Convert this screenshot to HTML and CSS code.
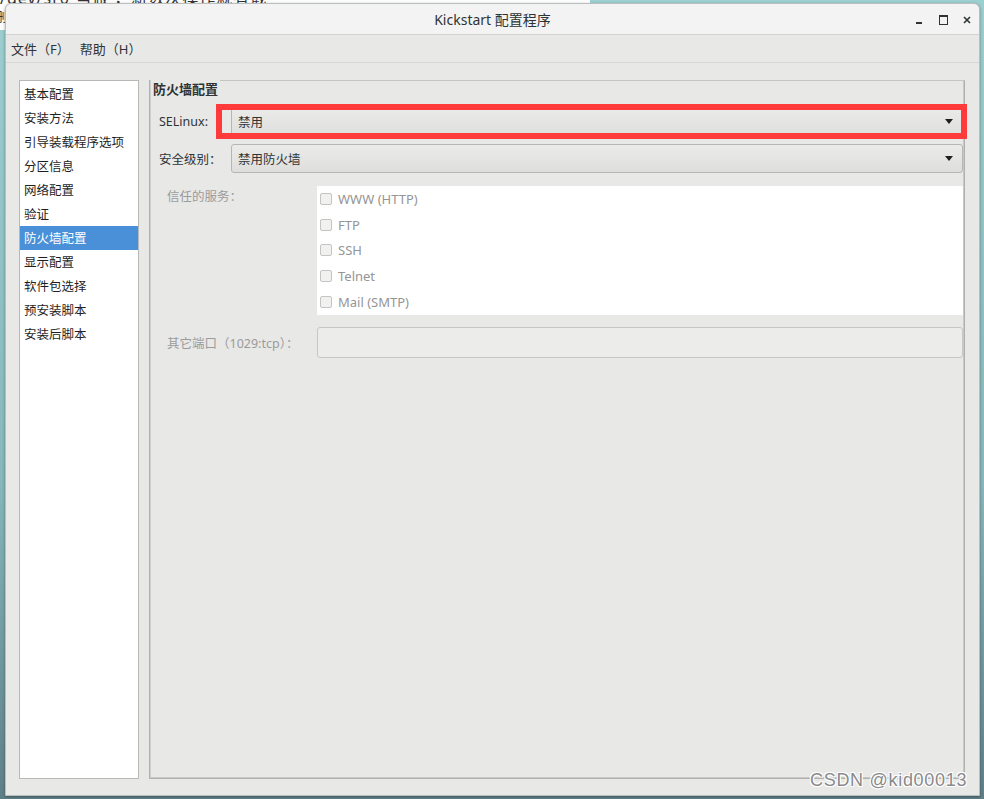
FILE: index.html
```html
<!DOCTYPE html>
<html lang="zh">
<head>
<meta charset="utf-8">
<title>Kickstart 配置程序</title>
<link rel="stylesheet" href="styles.css">
</head>
<body>
<div class="desktop">
  <div class="bgwin">/dev/sr0 当做 ，新数次操作就有截</div>
  <div class="bgmark">刪</div>
  <div class="window">
    <div class="titlebar">
      <div class="title">Kickstart 配置程序</div>
      <div class="wbtns">
        <span class="wb wb-min"></span>
        <span class="wb wb-max"></span>
        <span class="wb wb-close">
          <svg width="8" height="8" viewBox="0 0 8 8"><path d="M1 1L7 7M7 1L1 7" stroke="#2e3436" stroke-width="1.6"/></svg>
        </span>
      </div>
    </div>
    <div class="menubar">
      <span class="menu">文件（F）</span>
      <span class="menu">帮助（H）</span>
    </div>
    <div class="content">
      <ul class="nav">
        <li>基本配置</li>
        <li>安装方法</li>
        <li>引导装载程序选项</li>
        <li>分区信息</li>
        <li>网络配置</li>
        <li>验证</li>
        <li class="sel">防火墙配置</li>
        <li>显示配置</li>
        <li>软件包选择</li>
        <li>预安装脚本</li>
        <li>安装后脚本</li>
      </ul>
      <div class="frame">
        <div class="legend">防火墙配置</div>
        <div class="row row-se">
          <span class="lbl">SELinux:</span>
          <div class="combo"><span>禁用</span><span class="arrow"></span></div>
          <div class="highlight"></div>
        </div>
        <div class="row row-sec">
          <span class="lbl">安全级别：</span>
          <div class="combo"><span>禁用防火墙</span><span class="arrow"></span></div>
        </div>
        <div class="svc">
          <span class="dlbl">信任的服务：</span>
          <ul class="svclist">
            <li><span class="cb"></span>WWW (HTTP)</li>
            <li><span class="cb"></span>FTP</li>
            <li><span class="cb"></span>SSH</li>
            <li><span class="cb"></span>Telnet</li>
            <li><span class="cb"></span>Mail (SMTP)</li>
          </ul>
        </div>
        <div class="port">
          <span class="dlbl">其它端口（1029:tcp）：</span>
          <div class="entry"></div>
        </div>
      </div>
    </div>
  </div>
  <div class="watermark">CSDN @kid00013</div>
</div>
</body>
</html>
```
FILE: styles.css
```css
* { box-sizing: border-box; }
html, body { margin: 0; padding: 0; }
body {
  font-family: "Noto Sans", "Noto Sans CJK SC", sans-serif;
  font-size: 12.5px;
  color: #2e3436;
}
.desktop {
  position: relative;
  width: 984px;
  height: 799px;
  overflow: hidden;
  padding: 3px 4px 3px 5px;
  background: linear-gradient(to bottom, #9ccfd0 0%, #86b8bc 60%, #5f7f88 100%);
}
.bgwin {
  position: absolute;
  left: 0;
  top: -11px;
  width: 590px;
  height: 41px;
  background: #fdfdfd;
  padding-left: 0;
  font-size: 16px;
  line-height: 18px;
  color: #333;
  letter-spacing: 1px;
}
.bgmark {
  position: absolute;
  left: -6px;
  top: 6px;
  font-size: 13px;
  color: #333;
}
.window {
  position: relative;
  width: 975px;
  height: 793px;
  background: #e8e8e7;
  border: 1px solid #b9bebf;
  border-radius: 6px 6px 0 0;
  display: flex;
  flex-direction: column;
  box-shadow: 0 1px 3px rgba(0,0,0,0.35);
}
.titlebar {
  height: 31px;
  flex: none;
  background: #f3f3f3;
  border-bottom: 1px solid #d3d3d2;
  border-radius: 6px 6px 0 0;
  display: flex;
  align-items: center;
  justify-content: center;
  position: relative;
}
.title {
  font-size: 14px;
  color: #2e3436;
}
.wbtns {
  position: absolute;
  right: 0;
  top: 8px;
  display: flex;
  align-items: center;
}
.wb {
  width: 24px;
  height: 16px;
  display: flex;
  align-items: center;
  justify-content: center;
  position: relative;
}
.wb-min::before {
  content: "";
  width: 6px;
  height: 2px;
  background: #2e3436;
  margin-top: 6px;
}
.wb-max::before {
  content: "";
  width: 7px;
  height: 7px;
  border: 1.5px solid #2e3436;
  border-top-width: 2px;
}
.menubar {
  height: 28px;
  flex: none;
  display: flex;
  align-items: center;
  padding-left: 5px;
  border-bottom: 1px solid #d6d6d5;
  font-size: 13px;
}
.menu { margin-right: 10px; }
.content {
  flex: 1;
  display: flex;
  gap: 10px;
  padding: 17px 14px 16px 13px;
}
.nav {
  list-style: none;
  margin: 0;
  padding: 1px 0 0;
  width: 120px;
  flex: none;
  background: #fff;
  border: 1px solid #b8b8b6;
}
.nav li {
  height: 24px;
  line-height: 24px;
  padding: 1px 0 0 4px;
  color: #1f1f1f;
  white-space: nowrap;
}
.nav li.sel {
  background: #4a90d9;
  color: #fff;
}
.frame {
  flex: 1;
  border: 1px solid #b0b0ae;
  border-top-color: #c4c4c2;
  box-shadow: inset 1px 0 0 #d0d0ce, inset -1px -1px 0 #c8c8c6;
  display: flex;
  flex-direction: column;
  padding: 0 1px 0 9px;
}
.legend {
  align-self: flex-start;
  margin: -1px 0 0 -8px;
  padding: 0 2px 0 2px;
  background: #e8e8e7;
  font-weight: bold;
  line-height: 19px;
  font-size: 13px;
  color: #2e3436;
}
.row {
  display: flex;
  align-items: center;
  position: relative;
}
.row-se { margin-top: 8px; }
.row-sec { margin-top: 8px; }
.lbl {
  width: 72px;
  flex: none;
  color: #2e3436;
}
.combo {
  flex: 1;
  height: 29px;
  border: 1px solid #b6b6b4;
  border-radius: 3px;
  background: linear-gradient(to bottom, #ebebea, #dededd);
  display: flex;
  align-items: center;
  justify-content: space-between;
  padding: 0 9px 0 6px;
  color: #2e3436;
}
.arrow {
  width: 0;
  height: 0;
  border-left: 4px solid transparent;
  border-right: 4px solid transparent;
  border-top: 5px solid #1f1f1f;
}
.highlight {
  position: absolute;
  left: 57px;
  right: -4px;
  top: -3px;
  bottom: -3px;
  border: 6px solid #ff3a3a;
  pointer-events: none;
}
.svc {
  display: flex;
  margin-top: 13px;
}
.dlbl {
  width: 158px;
  flex: none;
  padding-left: 8px;
  color: #9b9b9b;
}
.svc .dlbl { padding-top: 2px; line-height: 17px; }
.svclist {
  flex: 1;
  list-style: none;
  margin: 0;
  padding: 0;
  background: #fff;
  height: 129px;
}
.svclist li {
  height: 25.8px;
  display: flex;
  align-items: center;
  padding-left: 3px;
  color: #959595;
  font-size: 13px;
}
.cb {
  width: 12px;
  height: 12px;
  border: 1px solid #c4c4c2;
  border-radius: 2px;
  background: #f1f1f0;
  margin-right: 6px;
  flex: none;
}
.port {
  display: flex;
  align-items: center;
  margin-top: 12px;
}
.entry {
  flex: 1;
  height: 31px;
  border: 1px solid #c6c6c4;
  border-radius: 3px;
  background: #ececeb;
}
.watermark {
  position: absolute;
  left: 810px;
  top: 770px;
  font-family: "Liberation Sans", "DejaVu Sans", sans-serif;
  font-size: 18px;
  color: #8a8a8a;
  text-shadow: -1px -1px 0 #fff, 1px -1px 0 #fff, -1px 1px 0 #fff, 1px 1px 0 #fff;
  letter-spacing: 0.7px;
}
```
